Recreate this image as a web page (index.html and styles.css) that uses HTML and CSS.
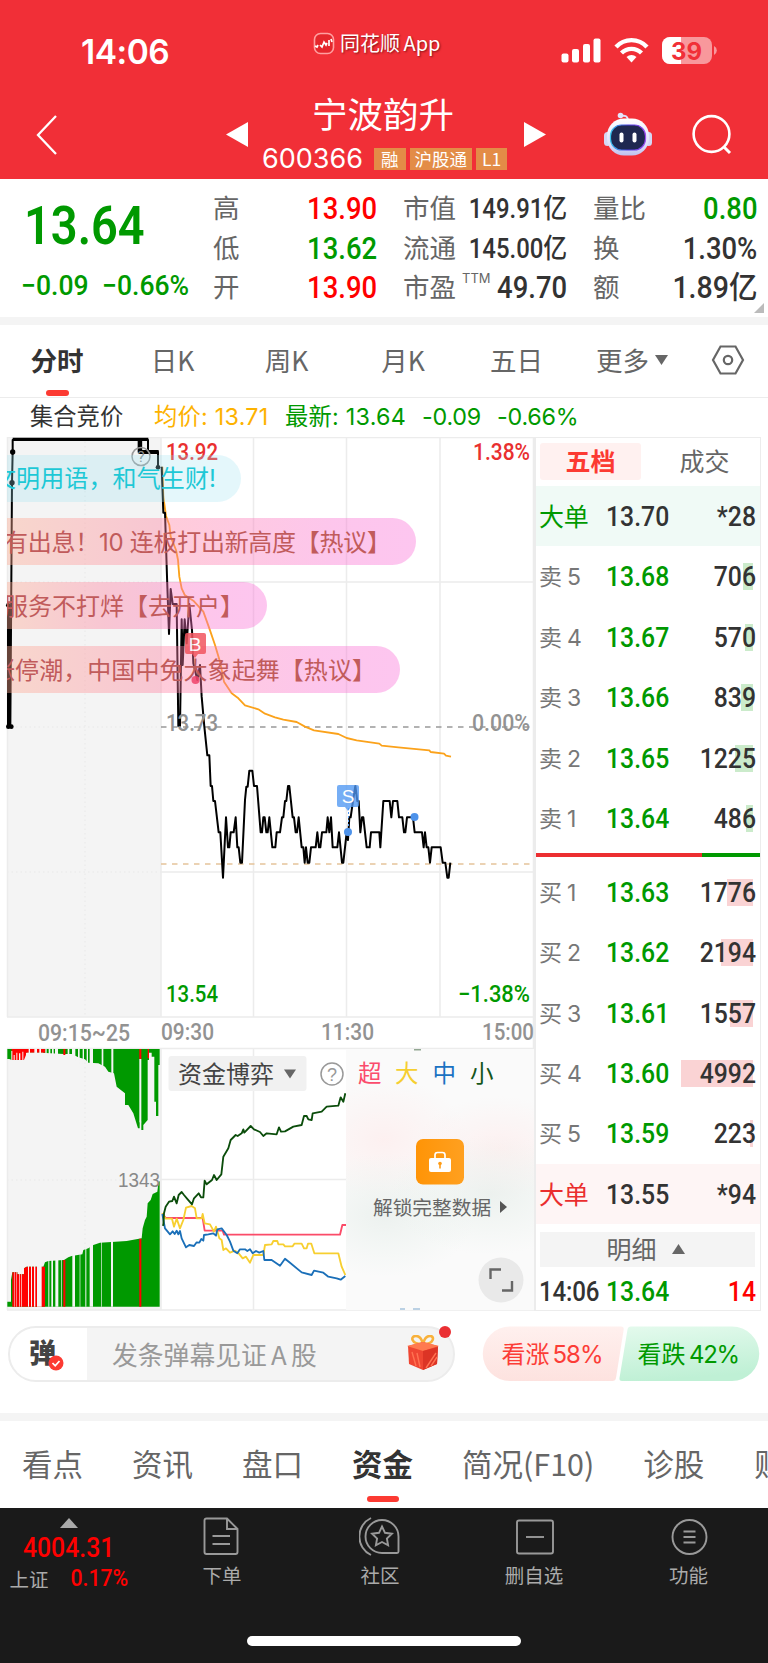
FILE: index.html
```
<!DOCTYPE html>
<html lang="zh-CN">
<head>
<meta charset="utf-8">
<title>宁波韵升 600366</title>
<link rel="stylesheet" href="styles.css">
</head>
<body>
<header class="top">
  <div class="status">
    <span class="clock">14:06</span>
    <span class="brand">
      <svg width="22" height="23" viewBox="0 0 22 23"><rect x="1.5" y="1.5" width="19" height="20" rx="6" fill="#e5262c" stroke="#ff9fa0" stroke-width="1.6"/><path d="M2 14l2 1 1-2M7 13l2 2 2-5 2 3 1-2M16 8v6M18 7l1 3" fill="none" stroke="#fff" stroke-width="1.7"/></svg>
      <span>同花顺 App</span>
    </span>
    <svg class="sys" width="158" height="30" viewBox="0 0 158 30">
      <g fill="#fff"><rect x="0.500" y="17.500" width="7" height="9" rx="2"/><rect x="11" y="13" width="7" height="13.500" rx="2"/><rect x="22" y="8" width="7" height="18.500" rx="2"/><rect x="32.500" y="2.500" width="7" height="24" rx="2"/></g>
      <g fill="none" stroke="#fff" stroke-width="4.300"><path d="M55 11a21 21 0 0 1 31 0"/><path d="M60.500 17a14 14 0 0 1 20 0"/></g>
      <path d="M70.500 26.500l-5-5.500a7.500 7.500 0 0 1 10 0z" fill="#fff"/>
      <rect x="101" y="1" width="50" height="27" rx="8" fill="#f8989c"/><path d="M120 1H109a8 8 0 0 0-8 8v11a8 8 0 0 0 8 8h11z" fill="#fff"/>
      <path d="M153 10a5 5 0 0 1 0 9z" fill="#f8989c"/>
      <text x="125.500" y="23.500" text-anchor="middle" textLength="31" lengthAdjust="spacingAndGlyphs" font-family="Inter" font-weight="700" font-size="24" fill="#f12f37">39</text>
    </svg>
  </div>
  <div class="titlebar">
    <svg class="back" width="24" height="42" viewBox="0 0 24 42"><path d="M21 2L3 21l18 19" fill="none" stroke="#fff" stroke-width="2.300"/></svg>
    <svg class="prev" width="22" height="25"><path d="M22 0v25L0 12.500z" fill="#fff"/></svg>
    <div class="stock">
      <h1>宁波韵升</h1>
      <div class="code"><span>600366</span><b>融</b><b>沪股通</b><b>L1</b></div>
    </div>
    <svg class="next" width="22" height="25"><path d="M0 0v25l22-12.500z" fill="#fff"/></svg>
    <svg class="bot" width="50" height="46" viewBox="0 0 50 46">
      <defs>
        <linearGradient id="shell" x2="0" y2="1"><stop stop-color="#fff"/><stop offset=".7" stop-color="#dfe0fa"/><stop offset="1" stop-color="#bfc2ee"/></linearGradient>
        <linearGradient id="rim"><stop stop-color="#39c4ef"/><stop offset=".5" stop-color="#4c3de0"/><stop offset="1" stop-color="#9c4cf0"/></linearGradient>
      </defs>
      <path d="M25 10c0-5-3-6-7-5" fill="none" stroke="#dfe0fa" stroke-width="2"/><circle cx="17.500" cy="4.500" r="2.800" fill="#e4e5fb"/>
      <rect x="1" y="21" width="7" height="14" rx="3.500" fill="#d5d7f5"/><rect x="42" y="21" width="7" height="14" rx="3.500" fill="#d5d7f5"/>
      <rect x="4" y="7.500" width="42" height="37" rx="17" fill="url(#shell)"/>
      <rect x="7.500" y="14" width="35" height="25" rx="11" fill="#1f2850" stroke="url(#rim)" stroke-width="1.200"/>
      <rect x="16.500" y="21.500" width="4" height="10" rx="2" fill="#fff"/><rect x="29.500" y="21.500" width="4" height="10" rx="2" fill="#fff"/>
    </svg>
    <svg class="find" width="42" height="42" viewBox="0 0 42 42"><circle cx="20.500" cy="20" r="17.900" fill="none" stroke="#fff" stroke-width="2.600"/><path d="M33 33l6 6" stroke="#fff" stroke-width="3"/></svg>
  </div>
</header>

<section class="stats">
  <div class="last">
    <div class="price"><span class="num">13.64</span></div>
    <div class="delta"><span class="num">−0.09</span><span class="num">−0.66%</span></div>
  </div>
  <dl>
    <div><dt>高</dt><dd class="num up">13.90</dd></div>
    <div><dt>市值</dt><dd class="num sm">149.91亿</dd></div>
    <div><dt>量比</dt><dd class="num down">0.80</dd></div>
    <div><dt>低</dt><dd class="num down">13.62</dd></div>
    <div><dt>流通</dt><dd class="num sm">145.00亿</dd></div>
    <div><dt>换</dt><dd class="num">1.30%</dd></div>
    <div><dt>开</dt><dd class="num up">13.90</dd></div>
    <div><dt>市盈<sup>TTM</sup></dt><dd class="num">49.70</dd></div>
    <div><dt>额</dt><dd class="num wide">1.89亿</dd></div>
  </dl>
  <i class="corner"></i>
</section>

<nav class="periods">
  <span class="on">分时</span><span>日K</span><span>周K</span><span>月K</span><span>五日</span><span>更多<svg width="13" height="12"><path d="M0 1h13l-6.500 10z" fill="#666"/></svg></span>
  <span><svg width="34" height="30" viewBox="0 0 34 30"><path d="M9.500 1.500h15l7.500 13.500-7.500 13.500h-15L2 15z" fill="none" stroke="#666" stroke-width="2.200"/><circle cx="17" cy="15" r="4.200" fill="none" stroke="#666" stroke-width="2.200"/></svg></span>
</nav>

<div class="legend"><span class="l1">集合竞价</span><span class="l2">均价: 13.71</span><span class="l3">最新: 13.64</span><span class="l4">-0.09</span><span class="l5">-0.66%</span></div>

<main class="board">
  <svg class="chart" width="534" height="874" viewBox="0 437 534 874">
    <defs>
      <linearGradient id="pill"><stop stop-color="#ffaa90"/><stop offset=".38" stop-color="#ff80a0"/><stop offset=".8" stop-color="#fa70d0"/><stop offset="1" stop-color="#fa70d8"/></linearGradient>
      <radialGradient id="blush"><stop stop-color="#ffe8e8" stop-opacity=".55"/><stop offset="1" stop-color="#ffe9e9" stop-opacity="0"/></radialGradient>
      <radialGradient id="mint"><stop stop-color="#e3ebe7" stop-opacity=".6"/><stop offset="1" stop-color="#e5f0ea" stop-opacity="0"/></radialGradient>
      <linearGradient id="gold"><stop stop-color="#ff9406"/><stop offset="1" stop-color="#ffa020"/></linearGradient>
      <clipPath id="plot"><rect x="7" y="437" width="527" height="874"/></clipPath>
      <clipPath id="lock"><rect x="346" y="1049" width="188" height="261"/></clipPath>
    </defs>
    <rect x="7" y="437" width="154" height="580" fill="#f4f4f4"/>
    <rect x="7" y="1049" width="154" height="261" fill="#f4f4f4"/>
    <g stroke="#ececec" stroke-width="1.500" fill="none">
      <path d="M7 437.500H534M7 1017H534M7 1048.500H534M7 1310H534M7.500 437V1017M7.500 1049V1310M161 437V1017M161 1049V1310M253.500 437V1017M346.500 437V1017M440 437V1017M533.500 437V1310M253.500 1049V1310M161 582H534M161 872H534M161 1179.500H346"/>
      <path stroke-dasharray="1.500 3" d="M85 437V1017M85 1049V1310M7 582H161M7 727H161M7 872H161M7 1180H161"/>
    </g>
    <path d="M161 727H534" stroke="#999" stroke-width="1.700" stroke-dasharray="5.500 5.500"/>
    <path d="M161 864H534" stroke="#e5c49b" stroke-width="1.500" stroke-dasharray="5.500 5.500"/>

    <g transform="translate(0 430) scale(.33333)" fill="none" stroke="#000" stroke-width="6" stroke-linejoin="round">
      <path d="M24 890V530M31 890L36 158 38 66V30H444V66L422 66V30M416 30V66H474V112"/>
      <path d="M28 530V890" stroke-width="8"/><path d="M38 28H445" stroke-width="10"/><path d="M416 66H476" stroke-width="12"/><path d="M422 32V66" stroke-width="9"/>
      <g fill="#000" stroke="none"><circle cx="38" cy="66" r="8"/><circle cx="36" cy="158" r="8"/><circle cx="25" cy="526" r="7"/><circle cx="25" cy="890" r="7"/><circle cx="34" cy="890" r="7"/><circle cx="474" cy="112" r="7"/></g>
    </g>
    <g transform="translate(150 430) scale(.33333)" fill="none" stroke-linejoin="round">
      <path stroke="#fba21b" stroke-width="5.500" d="M37 110L40 200 48 258 58 285 62 320 78 360 84 390 88 440 95 475 104 495 130 512 160 545 178 595 195 645 210 695 222 755 245 790 263 803 285 826 325 838 345 851 375 862 400 869 440 876 465 890 492 901 565 912 590 924 620 931 688 941 695 947 745 952 838 961 842 966 882 971 888 977 903 980"/>
      <path stroke="#000" stroke-width="6" d="M35 110L40 248H45L51 440 57 612 62 477 68 522H80L85 888H90L95 568 98 705 104 568 110 640 118 522 126 600 130 700 142 750 150 705 155 800 163 890 172 976H178L182 1068H186L190 1113H195L206 1207H211L219 1343 228 1162 234 1252H238L242 1207H251L257 1162 262 1252H266L271 1298H276L285 1110 289 1070H293L298 1022H307L312 1068H321L332 1207H336L340 1162H344L349 1207H353L358 1162 367 1252H376L380 1207H390L396 1162H400L405 1113H409L414 1068H418L428 1162H432L437 1207H441L446 1162 455 1252H460L464 1298 468 1252 473 1298H478L483 1252H497L502 1207 507 1252H511L516 1207H529L533 1162 538 1207 543 1162 548 1252H562L567 1207 576 1298H580L590 1207 594 1230 598 1162H602L609 1113 616 1068 622 1113H626L631 1207 636 1162H640L650 1252H659L663 1207H688L691 1252 700 1113H719L724 1162 729 1113H742L747 1162H757L762 1207H766L771 1162H789L794 1207H816L821 1252 825 1207 830 1252H835L840 1298 845 1252H872L878 1298H886L892 1343H896L901 1298"/>
    </g>
    <g class="axis">
      <text x="166" y="460" textLength="52" lengthAdjust="spacingAndGlyphs" fill="#e93030">13.92</text>
      <text x="473" y="460" textLength="57" lengthAdjust="spacingAndGlyphs" fill="#e93030">1.38%</text>
      <text x="166" y="731" textLength="52" lengthAdjust="spacingAndGlyphs">13.73</text>
      <text x="472" y="731" textLength="58" lengthAdjust="spacingAndGlyphs">0.00%</text>
      <text x="166" y="1002" textLength="52" lengthAdjust="spacingAndGlyphs" fill="#090">13.54</text>
      <text x="458" y="1002" textLength="72" lengthAdjust="spacingAndGlyphs" fill="#090">−1.38%</text>
      <text x="38" y="1041" textLength="92" lengthAdjust="spacingAndGlyphs">09:15~25</text>
      <text x="161" y="1040" textLength="53" lengthAdjust="spacingAndGlyphs">09:30</text>
      <text x="321" y="1040" textLength="53" lengthAdjust="spacingAndGlyphs">11:30</text>
      <text x="482" y="1040" textLength="52" lengthAdjust="spacingAndGlyphs">15:00</text>
    </g>
    <circle cx="141" cy="456.500" r="9" fill="none" stroke="#999" stroke-width="1.500"/><text x="141" y="462" text-anchor="middle" font-family="Roboto" font-size="15" fill="#888">?</text>

    <g class="barrage" clip-path="url(#plot)">
      <path d="M7 455H217.500a23.500 23.500 0 0 1 0 47H7z" fill="#9ee4f0" opacity=".28"/>
      <path d="M7 518H392.500a23.500 23.500 0 0 1 0 47H7z" fill="url(#pill)" opacity=".4"/>
      <path d="M7 582H243.500a23.500 23.500 0 0 1 0 47H7z" fill="url(#pill)" opacity=".4"/>
      <path d="M7 646H376.500a23.500 23.500 0 0 1 0 47H7z" fill="url(#pill)" opacity=".4"/>
      <text x="-8" y="487" textLength="224" fill="#1ec8d6">文明用语，和气生财!</text>
      <text x="4" y="551" textLength="387">有出息！10 连板打出新高度【热议】</text>
      <text x="4" y="615" textLength="240">服务不打烊【去开户】</text>
      <text x="-9" y="679" textLength="385">涨停潮，中国中免大象起舞【热议】</text>
    </g>
    <g opacity=".85">
      <path d="M187 633h17a2 2 0 0 1 2 2v17a2 2 0 0 1-2 2h-6l-3 4-3-4h-5a2 2 0 0 1-2-2v-17a2 2 0 0 1 2-2z" fill="#f2555f"/>
      <circle cx="195.500" cy="680" r="4" fill="#f0426a"/>
      <text x="195" y="650.500" text-anchor="middle" font-family="Liberation Sans" font-size="19" fill="#fff">B</text>
    </g>
    <g>
      <path d="M339 785h18a2 2 0 0 1 2 2v18a2 2 0 0 1-2 2h-6l-3 4-3-4h-6a2 2 0 0 1-2-2v-18a2 2 0 0 1 2-2z" fill="#4f97f2" opacity=".78"/>
      <path d="M348.500 808v22" stroke="#4f97f2" stroke-dasharray="2 2"/>
      <circle cx="348" cy="832" r="4" fill="#4d92ea"/><circle cx="414.500" cy="817" r="4" fill="#4d92ea"/>
      <text x="348" y="803" text-anchor="middle" font-family="Liberation Sans" font-size="19" fill="#fff">S</text>
    </g>

    <g transform="translate(0 1040) scale(.33333)">
      <path fill="#090" d="M22 27H479V75H475V228H468V185H463V50H455V38H447V60H443V240L430 255V270H424V245H419V265H414L400 220 385 195H375V160L350 140 342 100 325 95 315 80 295 70 265 68 255 58 235 52 215 42H190L125 38H75L60 60H35L28 57H22z"/>
      <path fill="#f00" d="M35 27H135V38H78V45L72 60H35zM190 27h6v18h-6zM418 27h6v30h-6zM443 27h4v28h-4z"/>
      <path fill="#f4f4f4" d="M34 33h3v30h-3zM41 45h3v18h-3zM49 38h3v25h-3zM57 40h4v23h-4zM67 35h3v28h-3zM80 38H130V44H80zM86 25h4v20h-4zM103 25h8v20h-8zM118 25h5v20h-5zM136 25h4v20h-4zM146 25h5v20h-5zM156 25h5v20h-5zM165 25h9v20h-9zM203 25h5v30h-5zM216 25h10v40h-10zM234 25h5v45h-5zM248 25h4v45h-4zM260 25h4v50h-4zM269 25h10v60h-10zM305 25h5v65h-5zM334 25h6v75h-6zM424 57h-6v190h6z"/>
      <path fill="#090" d="M22 800V785H33V720L37 697H52V703H72V685L80 680H130L135 667 145 663 192 660 205 652 215 648 247 643 250 630 265 625 280 615 300 608 380 603 425 595 428 565 435 540 440 530 443 490 452 480 458 462 472 455 475 430 479 422V800z"/>
      <path fill="#f00" d="M37 697H52V703H72V685L80 680H135V800H37zM190 660h6v140h-6zM418 596h6v204h-6z"/>
      <path fill="#f4f4f4" d="M42 680h1.500v120h-1.500zM49 680h1.500v120h-1.500zM58 680h2v120h-2zM64 680h2v120h-2zM84 675h3v125h-3zM93 675h3v125h-3zM102 675h4v125h-4zM111 675h14v125h-14zM145 655h3v145h-3zM154 655h5v145h-5zM166 655h9v145h-9zM184 655h2v145h-2zM217 640h8v160h-8zM239 640h2v160h-2zM256 620h3v180h-3zM269 615h10v185h-10zM304 600h2v200h-2zM333 600h6v200h-6z"/>
      <g fill="none" stroke-width="5.500" stroke-linejoin="round">
        <path stroke="#fb4b68" d="M487 520L497 534H608L614 572H668L672 584H1020L1027 555H1038"/>
        <path stroke="#f7cf30" d="M487 520L497 536H516L522 560 530 536 540 565 550 540 558 503 575 498 585 505 590 535H605L608 522 614 550 630 553 642 575 648 560 658 595 665 600 670 630 678 625 690 638 705 632 716 640 728 655 738 650 750 668 760 645H790L795 615 815 613 820 603H832L835 613H850L855 619H878L883 611H905L912 625H920L924 611H934L943 640H1015L1025 680 1036 705"/>
        <path stroke="#1a6fb8" d="M487 522L495 565 510 583 518 574 524 582 530 572 535 583 540 573 545 595 558 622 568 615 582 618 590 607 598 608 604 597 610 602 612 585 625 583 640 580 648 587 652 568 665 565 680 585 690 605 700 632 712 640 720 628 735 628 742 633 750 628 758 640 768 633 778 638 790 633 793 660 815 660 840 677 855 656 870 668 905 697 935 705 942 692 970 698 985 710 1010 715 1022 719 1036 708"/>
        <path stroke="#0b4d0b" d="M487 555H490L492 520 497 500 507 485 517 483 522 470 530 490 536 465 545 456 552 465 563 478 576 493 582 475 596 460 603 472H610L614 422 620 433 636 420 642 405 650 420 664 403 670 350 685 325 692 300 707 285 713 288 725 280 730 268 733 278 752 258 762 268 780 276 790 288 800 280 830 283 837 262 843 275 855 274 880 260 905 255 912 228H920L925 238 935 240 938 220 965 215 980 200 1015 197 1022 172 1030 185 1036 160"/>
      </g>
    </g>
    <text x="118" y="1187" textLength="42" lengthAdjust="spacingAndGlyphs" font-family="Liberation Sans" font-size="19.500" fill="#888">1343</text>

    <rect x="168.500" y="1056" width="138" height="35" rx="3" fill="#f1f1f1"/>
    <g class="cjk"><text x="178" y="1083" font-size="24" fill="#444">资金博弈</text></g>
    <path d="M284 1069.500h12l-6 9z" fill="#666"/>
    <circle cx="332" cy="1074" r="11" fill="none" stroke="#999" stroke-width="1.500"/><text x="332" y="1080.500" text-anchor="middle" font-family="Liberation Sans" font-size="18" fill="#999">?</text>

    <g clip-path="url(#lock)">
      <rect x="346" y="1049" width="188" height="261" fill="#fafafa"/>
      <ellipse cx="384" cy="1140" rx="85" ry="62" fill="url(#blush)"/><ellipse cx="500" cy="1148" rx="85" ry="52" fill="url(#blush)"/>
      <ellipse cx="385" cy="1215" rx="90" ry="62" fill="url(#mint)"/><ellipse cx="490" cy="1195" rx="100" ry="60" fill="url(#mint)"/>
      <path d="M414 1049.500h7" stroke="#92a792" stroke-width="2"/><path d="M400 1309h5m8 0h7" stroke="#a6c4dd" stroke-width="1.500"/>
    </g>
    <g class="cjk" font-size="23.500">
      <text x="358" y="1082" fill="#fb4b6c">超</text><text x="395" y="1082" fill="#f6cf30">大</text><text x="432.500" y="1082" fill="#1a72c2">中</text><text x="470" y="1082" fill="#16561a">小</text>
      <text x="373" y="1214.500" font-size="19.700" fill="#666">解锁完整数据</text>
    </g>
    <rect x="416" y="1139" width="48" height="45.500" rx="7" fill="url(#gold)"/>
    <rect x="429" y="1158" width="22" height="14" rx="2" fill="#fff"/><path d="M435 1158v-3q0-2.500 2.500-2.500h5q2.500 0 2.500 2.500v3" fill="none" stroke="#fff" stroke-width="1.700"/><circle cx="440" cy="1163.500" r="1.800" fill="#ff9b14"/><path d="M440 1163v5.500" stroke="#ff9b14" stroke-width="1.600"/>
    <path d="M500 1201l7 6-7 6z" fill="#555"/>
    <circle cx="501" cy="1280" r="22.500" fill="#e9e9e9"/><path d="M490.500 1279v-9.500H501M502 1290.500h10V1281" fill="none" stroke="#666" stroke-width="2.400"/>
  </svg>

  <aside class="book">
    <div class="tabs"><b>五档</b><span>成交</span></div>
    <div class="row big sell"><span>大单</span><em class="num">13.70</em><i class="num">*28</i></div>
    <div class="row"><span>卖 5</span><em class="num">13.68</em><i class="num">706</i><u style="width:10px"></u></div>
    <div class="row"><span>卖 4</span><em class="num">13.67</em><i class="num">570</i><u style="width:8px"></u></div>
    <div class="row"><span>卖 3</span><em class="num">13.66</em><i class="num">839</i><u style="width:12px"></u></div>
    <div class="row"><span>卖 2</span><em class="num">13.65</em><i class="num">1225</i><u style="width:18px"></u></div>
    <div class="row"><span>卖 1</span><em class="num">13.64</em><i class="num">486</i><u style="width:7px"></u></div>
    <div class="ratio"></div>
    <div class="row buy"><span>买 1</span><em class="num">13.63</em><i class="num">1776</i><u style="width:26px"></u></div>
    <div class="row buy"><span>买 2</span><em class="num">13.62</em><i class="num">2194</i><u style="width:32px"></u></div>
    <div class="row buy"><span>买 3</span><em class="num">13.61</em><i class="num">1557</i><u style="width:23px"></u></div>
    <div class="row buy"><span>买 4</span><em class="num">13.60</em><i class="num">4992</i><u style="width:72px"></u></div>
    <div class="row buy"><span>买 5</span><em class="num">13.59</em><i class="num">223</i><u style="width:3px"></u></div>
    <div class="row big bid"><span>大单</span><em class="num">13.55</em><i class="num">*94</i></div>
    <div class="detail">明细<svg width="13" height="10"><path d="M0 10h13L6.500 0z" fill="#666"/></svg></div>
    <div class="row tick"><span class="num">14:06</span><em class="num">13.64</em><i class="num">14</i></div>
  </aside>
</main>

<section class="talk">
  <div class="input">
    <div class="dan">弹<svg width="16" height="16" viewBox="0 0 16 16"><circle cx="8" cy="8" r="7.500" fill="#fc3a32"/><path d="M4.500 8l2.700 2.800L11.500 6" fill="none" stroke="#fff" stroke-width="1.800"/></svg></div>
    <div class="hint">发条弹幕见证 A 股
      <svg width="34" height="36" viewBox="0 0 34 36"><path d="M16 9C5 9 4 1 10 1c4 0 6 4 7 8 1-4 3-8 7-8 5 0 4 8-6 8" fill="none" stroke="#f8b13b" stroke-width="2.600"/><path d="M2 11l15-4 15 4-1 18-14 6-14-6z" fill="#ef4632"/><path d="M1 11l16-4 16 4-16 5z" fill="#ff7a50"/><path d="M17 16v19l14-6 1-17z" fill="#dc3425"/><path d="M20 33l10-15M25 31l6-9M6 17l4 14M11 18l3 14" stroke="#ff7252" stroke-width="1.400"/></svg>
    </div>
    <i></i>
  </div>
  <div class="vote">
    <svg width="278" height="56" viewBox="0 0 278 56">
      <defs><linearGradient id="bull" x2="0" y2="1"><stop stop-color="#fff0ee"/><stop offset="1" stop-color="#fde2df"/></linearGradient><linearGradient id="bear" x2=".2" y2="1"><stop stop-color="#e4faed"/><stop offset="1" stop-color="#bff0d5"/></linearGradient></defs>
      <path d="M28 .5H139q3 0 2.700 3L134 52q-.5 3-3.500 3H28a27.200 27.200 0 0 1 0-54.500z" fill="url(#bull)"/>
      <path d="M250 .5H149q-3 0-3.500 3L137.500 52q-.5 3 2.500 3h110a27.200 27.200 0 0 0 0-54.500z" fill="url(#bear)"/>
      <g fill="#fc3d37"><text x="19.500" y="36.500">看涨</text><text x="70.500" y="36.500" textLength="51">58%</text></g>
      <g fill="#090"><text x="155.500" y="36.500">看跌</text><text x="207" y="36.500" textLength="51">42%</text></g>
    </svg>
  </div>
</section>

<nav class="sections"><span>看点</span><span>资讯</span><span>盘口</span><span class="on">资金</span><span class="f10">简况(F10)</span><span>诊股</span><span>财务</span></nav>

<footer class="dock">
  <div class="items">
    <div class="index"><svg width="18" height="10"><path d="M0 10h18L9 0z" fill="#aaa"/></svg><strong class="num">4004.31</strong><p><span>上证</span><b class="num">0.17%</b></p></div>
    <div><svg width="40" height="40" viewBox="0 0 40 40"><path d="M2.500 3.500q0-2 2-2H25l10.500 10.500V35q0 2-2 2h-29q-2 0-2-2zM25 2v10h10M10.500 19h17.500M10.500 27h17.500"/></svg><span>下单</span></div>
    <div><svg width="42" height="40" viewBox="0 0 42 40"><path d="M12 1A20.500 20.500 0 0 0 12 38M23 3a16.500 16.500 0 0 0 0 33H38q1.500 0 1.500-1.500V19.500A16.500 16.500 0 0 0 23 3zM23 9.500l3 6.300 6.900.9-5 4.800 1.200 6.800-6.100-3.300-6.100 3.300 1.200-6.800-5-4.800 6.900-.9z"/></svg><span>社区</span></div>
    <div><svg width="40" height="40" viewBox="0 0 40 40"><rect x="3" y="3.500" width="36" height="33" rx="2"/><path d="M12 20h18"/></svg><span>删自选</span></div>
    <div><svg width="40" height="40" viewBox="0 0 40 40"><circle cx="20.500" cy="20" r="17"/><path d="M14.500 14.500h12M14.500 20h12M14.500 25.500h12"/></svg><span>功能</span></div>
  </div>
  <div class="home"></div>
</footer>
</body>
</html>
```
FILE: styles.css
```
* { box-sizing: border-box; margin: 0; padding: 0; }
body { width: 768px; height: 1663px; overflow: hidden; background: #fff; color: #333; font-family: "Noto Sans CJK SC", sans-serif; }
svg { display: block; flex: none; }
em, i { font-style: normal; }
.num { font-family: Roboto, "Noto Sans CJK SC", sans-serif; font-weight: 500; display: inline-block; transform: scaleX(.885); transform-origin: right center; white-space: nowrap; }
.up { color: #f00; }
.down { color: #090; }

.top { height: 179px; background: #f12f37; color: #fff; }
.status { height: 92px; padding: 36px 0 0 81px; display: flex; align-items: flex-start; }
.clock { font: 600 33.500px/32px Inter; letter-spacing: -.5px; width: 232px; }
.brand { display: flex; gap: 5px; font-size: 20px; line-height: 20px; width: 250px; margin-top: -4px; text-shadow: 1px 1px 2px #8a1418; white-space: nowrap; word-spacing: -1px; }
.brand span { margin-top: 1px; }
.sys { margin-left: -2px; }
.titlebar { height: 87px; display: flex; align-items: flex-start; }
.back { margin: 22px 0 0 35px; }
.prev { margin: 30px 0 0 167px; }
.stock { width: 276px; height: 87px; }
.stock h1 { font-size: 35.500px; font-weight: 400; line-height: 42px; text-align: left; padding-left: 64px; }
.code { display: flex; align-items: center; padding: 14px 0 0 14px; height: 36px; gap: 4px; }
.code span { font: 400 27px/22px Inter; width: 108px; text-align: left; }
.code b { height: 22px; line-height: 21px; font-weight: 400; font-size: 17.500px; padding: 0 7px; background: #e38c47; }
.code b:nth-of-type(2) { padding: 0 5px; }
.code b:nth-of-type(3) { padding: 0; width: 31px; text-align: center; }
.next { margin-top: 30px; }
.bot { margin: 19px 0 0 57px; }
.find { margin: 22px 0 0 38px; }

.stats { height: 146px; border-bottom: 8px solid #f4f4f4; display: flex; position: relative; }
.last { width: 214px; color: #090; }
.price { padding: 10px 0 0 24px; font-size: 54px; line-height: 64px; }
.price .num { transform-origin: left; font-weight: 600; transform: scaleX(.87); }
.delta { padding: 11px 22px 0 21px; display: flex; font-size: 27.500px; line-height: 34px; }
.delta .num { transform-origin: left; transform: scaleX(.965); }
.delta .num:first-child { width: 82px; }
.stats dl { display: grid; grid-template-columns: repeat(3, 163px); grid-auto-rows: 39.500px; column-gap: 27px; padding-top: 10px; }
.stats dl div { display: flex; justify-content: space-between; line-height: 39px; white-space: nowrap; }
.stats dt { font-size: 26.500px; line-height: 36px; color: #666; width: 60px; margin-left: -1px; }
.stats dd { font-size: 31px; line-height: 39px; }
.stats dd.sm { font-size: 27px; line-height: 40px; }
.stats dd.wide { transform: scaleX(.92); }
.stats sup { font: 400 13px/1 Inter; display: inline-block; margin-left: 6px; vertical-align: 14px; }
.corner { position: absolute; right: 4px; bottom: 4px; border: 5px solid transparent; border-right-color: #bbb; border-bottom-color: #bbb; }

.periods { height: 73px; display: grid; grid-template-columns: 114px 117px 111px 122px 105px 126px 66px; border-bottom: 1.500px solid #ececec; font-size: 26.500px; line-height: 68px; color: #666; }
.periods span { display: flex; height: 70px; justify-content: center; align-items: center; gap: 6px; }
.periods .on { color: #333; font-weight: 700; flex-direction: column; gap: 0; height: 71px; }
.periods .on::after { content: ""; width: 23px; height: 6px; border-radius: 3px; background: #fc3a32; margin-top: -4px; flex: none; }
.legend { height: 39px; padding-left: 30px; display: grid; grid-template-columns: 124px 131px 137px 75px 100px; line-height: 38px; white-space: nowrap; font-size: 23.300px; font-family: Inter, "Noto Sans CJK SC", sans-serif; color: #090; letter-spacing: -.2px; }
.legend .l1 { color: #333; letter-spacing: 0; }
.legend .l2 { color: #fdb200; letter-spacing: .25px; }
.legend .l3 { letter-spacing: .25px; }

.board { height: 874px; display: flex; }
.axis text { font-family: Roboto, sans-serif; font-weight: 500; font-size: 24px; }
.axis text:not([fill]) { fill: #929292; }
.barrage text { font-family: Inter, "Noto Sans CJK SC", sans-serif; font-size: 24px; }
.barrage text:not([fill]) { fill: #c15b5b; }
.book { width: 227px; border: 1.500px solid #ececec; border-left-width: 2px; }
.tabs { height: 48px; display: flex; align-items: flex-start; padding: 5px 0 0 4px; line-height: 35px; font-size: 25px; color: #666; text-align: center; }
.tabs b { width: 101px; height: 37px; background: #fff1f0; border-radius: 3px; color: #fc3a32; }
.tabs span { flex: 1; padding-left: 8px; }
.row { height: 60.450px; display: grid; grid-template-columns: 67px 77px 1fr; padding: 0 4px 0 3px; align-items: center; position: relative; line-height: 62px; font-size: 28px; white-space: nowrap; }
.row span { font-family: Inter, "Noto Sans CJK SC", sans-serif; font-size: 23px; color: #777; letter-spacing: -.2px; word-spacing: -1px; }
.row em { color: #090; transform-origin: left; }
.row i { text-align: right; z-index: 1; }
.row u { position: absolute; right: 7px; top: 17px; height: 27px; background: #cbebcb; }
.buy u { background: #fad3d4; }
.big span { font-size: 25px; color: #090; }
.big em { color: #333; }
.sell { background: #f0faf6; }
.bid { background: #fef5f5; }
.bid span { color: #ea2e2e; }
.ratio { height: 13px; background: linear-gradient(90deg, #ec2e31 74%, #090 74%) 0 4px / 100% 4px no-repeat; }
.detail { height: 35px; line-height: 33px; margin: 8px 5px 0 4px; background: #f4f4f4; display: flex; align-items: center; justify-content: center; gap: 15px; padding: 0 12px 2px 8px; color: #666; font-size: 25px; }
.tick { height: 48px; line-height: 50px; }
.tick .num:first-child { font: 500 28px/50px Roboto; color: #333; transform-origin: left; transform: scaleX(.86); }
.tick i { color: #f00; }

.talk { height: 110px; border-bottom: 8px solid #f4f4f4; padding: 15px 8px 0; display: flex; justify-content: space-between; }
.input { width: 447px; height: 56px; border: 2px solid #ececec; border-radius: 28px; display: flex; position: relative; background: #f4f4f4; }
.dan { width: 77px; border-radius: 26px 0 0 26px; background: #fff; padding-left: 19px; font-weight: 900; font-size: 27px; line-height: 47px; position: relative; color: #444; }
.dan svg { position: absolute; left: 38px; top: 27px; }
.hint { flex: 1; height: 50px; display: flex; justify-content: space-between; align-items: center; padding: 0 13px 0 25px; color: #999; font-size: 25.800px; white-space: nowrap; word-spacing: -1.500px; }
.input > i { position: absolute; right: 2px; top: -2px; width: 12px; height: 12px; border-radius: 50%; background: #ea2f33; }
.vote text { font-family: Inter, "Noto Sans CJK SC", sans-serif; font-size: 24px; }

.sections { height: 87px; display: flex; gap: 49px; padding-left: 22px; overflow: hidden; font-size: 30.500px; line-height: 85px; color: #666; white-space: nowrap; }
.sections .f10 { width: 133px; }
.sections .on { font-weight: 700; color: #333; display: flex; flex-direction: column; align-items: center; }
.sections .on::after { content: ""; width: 32px; height: 6px; border-radius: 3px; background: #fc3a32; margin-top: -10px; }
.sections span:last-child { margin-left: 1px; }

.dock { height: 155px; background: #1a1a1a; color: #aaa; }
.items { height: 128px; display: grid; grid-template-columns: 145px 154px 162px 146px 163px; font-size: 19.500px; }
.items > div { display: flex; flex-direction: column; align-items: center; padding-top: 9px; line-height: 35px; }
.items > div > svg { fill: none; stroke: #999; stroke-width: 1.900; }
.items .index { padding: 10px 7px 0 0; }
.items .index > svg { stroke: none; }
.index .num { color: #f00; }
.index strong { font-size: 28px; line-height: 34px; transform-origin: center; margin-top: 3px; }
.index p { display: flex; width: 119px; justify-content: space-between; line-height: 27px; }
.index p .num { font-size: 24px; }
.home { width: 274px; height: 10px; border-radius: 5px; background: #fff; margin-left: 247px; }
```
